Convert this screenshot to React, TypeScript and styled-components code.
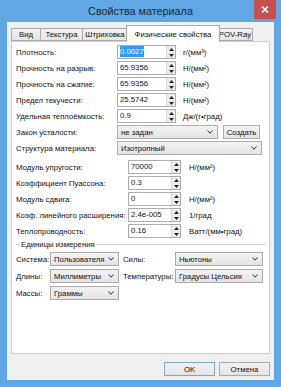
import styled, { createGlobalStyle } from 'styled-components';

const GlobalStyle = createGlobalStyle`
  html, body {
    margin: 0;
    padding: 0;
  }
  body {
    width: 281px;
    height: 387px;
    overflow: hidden;
    font-family: "Liberation Sans", Arial, sans-serif;
    color: #111;
  }
`;

const FS = '7.75px';

const upperRows = [
  { label: 'Плотность:', value: '0.0027', unit: 'г/(мм³)', selected: true },
  { label: 'Прочность на разрыв:', value: '65.9356', unit: 'Н/(мм²)' },
  { label: 'Прочность на сжатие:', value: '65.9356', unit: 'Н/(мм²)' },
  { label: 'Предел текучести:', value: '25.5742', unit: 'Н/(мм²)' },
  { label: 'Удельная теплоёмкость:', value: '0.9', unit: 'Дж/(г•град)' },
];

const lowerRows = [
  { label: 'Модуль упругости:', value: '70000', unit: 'Н/(мм²)' },
  { label: 'Коэффициент Пуассона:', value: '0.3', unit: '' },
  { label: 'Модуль сдвига:', value: '0', unit: 'Н/(мм²)' },
  { label: 'Коэф. линейного расширения:', value: '2.4e-005', unit: '1/град' },
  { label: 'Теплопроводность:', value: '0.16', unit: 'Ватт/(мм•град)' },
];

const tabs = [
  { name: 'Вид', w: 30 },
  { name: 'Текстура', w: 43 },
  { name: 'Штриховка', w: 46 },
  { name: 'Физические свойства', w: 91, active: true },
  { name: 'POV-Ray', w: 36 },
];

const Chevron = () => (
  <svg width='6' height='4' viewBox='0 0 6 4'>
    <polyline points='0.5,0.5 3,3.2 5.5,0.5' fill='none' stroke='#333' strokeWidth='1' />
  </svg>
);

const Spinner = () => (
  <SpinBox>
    <SpinHalf>
      <svg width='5' height='3' viewBox='0 0 5 3'>
        <polygon points='0,3 2.5,0 5,3' fill='#222' />
      </svg>
    </SpinHalf>
    <SpinHalf>
      <svg width='5' height='3' viewBox='0 0 5 3'>
        <polygon points='0,0 2.5,3 5,0' fill='#222' />
      </svg>
    </SpinHalf>
  </SpinBox>
);

const App = () => {
  return (
    <>
      <GlobalStyle />
      <Window>
        <TitleBar>
          <span />
          <Title>Свойства материала</Title>
          <CloseButton>
            <svg width='8' height='7' viewBox='0 0 8 7'>
              <path d='M1 0.5 L7 6.5 M7 0.5 L1 6.5' stroke='#fff' strokeWidth='1.6' />
            </svg>
          </CloseButton>
        </TitleBar>

        <Client>
          <TabStrip>
            {tabs.map((t) => (
              <Tab key={t.name} $w={t.w} $active={t.active}>
                {t.name}
              </Tab>
            ))}
          </TabStrip>

          <Panel>
            {upperRows.map((r, i) => (
              <Row key={r.label} $mt={i === 0 ? 0 : 2}>
                <Label $w={101}>{r.label}</Label>
                <NumField $w={59}>
                  <NumValue>
                    {r.selected ? <Selection>{r.value}</Selection> : r.value}
                  </NumValue>
                  <Spinner />
                </NumField>
                <Unit $ml={7}>{r.unit}</Unit>
              </Row>
            ))}

            <Row $mt={2}>
              <Label $w={101}>Закон усталости:</Label>
              <Select $w={101}>
                не задан
                <Chevron />
              </Select>
              <Button $w={37} $ml={5}>Создать</Button>
            </Row>

            <Row $mt={2}>
              <Label $w={101}>Структура материала:</Label>
              <Select $w={145}>
                Изотропный
                <Chevron />
              </Select>
            </Row>

            {lowerRows.map((r, i) => (
              <Row key={r.label} $mt={i === 0 ? 5 : 2}>
                <Label $w={112}>{r.label}</Label>
                <NumField $w={53}>
                  <NumValue>{r.value}</NumValue>
                  <Spinner />
                </NumField>
                <Unit $ml={8}>{r.unit}</Unit>
              </Row>
            ))}

            <GroupHeader>
              <GroupLine $w={4} />
              <GroupTitle>Единицы измерения</GroupTitle>
              <GroupLine />
            </GroupHeader>

            <Row $mt={2}>
              <Label $w={34}>Система:</Label>
              <Select $w={69}>
                Пользователя
                <Chevron />
              </Select>
              <Label $w={52} $ml={4}>Силы:</Label>
              <Select $w={88}>
                Ньютоны
                <Chevron />
              </Select>
            </Row>

            <Row $mt={3}>
              <Label $w={34}>Длины:</Label>
              <Select $w={69}>
                Миллиметры
                <Chevron />
              </Select>
              <Label $w={52} $ml={4}>Температуры:</Label>
              <Select $w={88}>
                Градусы Цельсия
                <Chevron />
              </Select>
            </Row>

            <Row $mt={3}>
              <Label $w={34}>Массы:</Label>
              <Select $w={69}>
                Граммы
                <Chevron />
              </Select>
            </Row>
          </Panel>

          <ButtonBar>
            <Button $w={51} $default>OK</Button>
            <Button $w={51}>Отмена</Button>
          </ButtonBar>
        </Client>
      </Window>
    </>
  );
};

const Window = styled.div`
  width: 281px;
  height: 387px;
  box-sizing: border-box;
  background: #60a7e3;
  display: flex;
  flex-direction: column;
`;

const TitleBar = styled.div`
  height: 22px;
  flex: none;
  display: grid;
  grid-template-columns: 1fr auto 1fr;
`;

const Title = styled.div`
  font-size: 10.8px;
  line-height: 22px;
  color: #1d2b39;
  white-space: nowrap;
`;

const CloseButton = styled.div`
  justify-self: end;
  width: 22px;
  height: 19px;
  margin-right: 5px;
  background: #c84f4b;
  display: flex;
  align-items: center;
  justify-content: center;
`;

const Client = styled.div`
  flex: 1;
  margin: 0 7px 7px;
  background: #f0f0f0;
  display: flex;
  flex-direction: column;
  padding: 3px 4px 4px 4px;
`;

const TabStrip = styled.div`
  height: 16px;
  flex: none;
  display: flex;
  align-items: flex-end;
`;

const Tab = styled.div<{ $w: number; $active?: boolean }>`
  box-sizing: border-box;
  width: ${(p) => (p.$active ? p.$w + 3 : p.$w)}px;
  height: ${(p) => (p.$active ? 17 : 13)}px;
  margin: ${(p) => (p.$active ? '0 -2px -1px -2px' : '0 0 0 -1px')};
  border: 1px solid #acacac;
  border-bottom: ${(p) => (p.$active ? 'none' : '1px solid #acacac')};
  background: ${(p) => (p.$active ? '#fff' : 'linear-gradient(#f3f3f3, #e6e6e6)')};
  position: relative;
  z-index: ${(p) => (p.$active ? 2 : 1)};
  display: flex;
  align-items: center;
  justify-content: center;
  font-size: ${FS};
  white-space: nowrap;

  &:first-child {
    margin-left: 0;
  }
`;

const Panel = styled.div`
  height: 313px;
  flex: none;
  box-sizing: border-box;
  border: 1px solid #cfcfcf;
  background: #fff;
  padding: 3px 3px 0 4px;
  display: flex;
  flex-direction: column;
`;

const Row = styled.div<{ $mt: number }>`
  display: flex;
  align-items: center;
  height: 14px;
  flex: none;
  margin-top: ${(p) => p.$mt}px;
`;

const Label = styled.span<{ $w: number; $ml?: number }>`
  width: ${(p) => p.$w}px;
  margin-left: ${(p) => p.$ml ?? 0}px;
  flex: none;
  font-size: ${FS};
  white-space: nowrap;
`;

const NumField = styled.div<{ $w: number }>`
  width: ${(p) => p.$w}px;
  height: 14px;
  box-sizing: border-box;
  border: 1px solid #abadb3;
  background: #fff;
  display: flex;
  flex: none;
`;

const NumValue = styled.div`
  flex: 1;
  padding-left: 2px;
  font-size: ${FS};
  line-height: 12px;
  white-space: nowrap;
  overflow: hidden;
`;

const Selection = styled.span`
  background: #3399ff;
  color: #fff;
  padding: 1px 0;
`;

const SpinBox = styled.div`
  width: 8px;
  margin: 0 0 0 1px;
  display: flex;
  flex-direction: column;
  background: #ececec;
  border-left: 1px solid #dadada;
`;

const SpinHalf = styled.div`
  flex: 1;
  display: flex;
  align-items: center;
  justify-content: center;
`;

const Unit = styled.span<{ $ml: number }>`
  margin-left: ${(p) => p.$ml}px;
  font-size: ${FS};
  white-space: nowrap;
`;

const Select = styled.div<{ $w: number }>`
  width: ${(p) => p.$w}px;
  height: 14px;
  box-sizing: border-box;
  flex: none;
  border: 1px solid #acacac;
  background: linear-gradient(#f3f3f3, #e4e4e4);
  display: flex;
  align-items: center;
  padding: 0 4px 0 3px;
  font-size: ${FS};
  white-space: nowrap;

  svg {
    margin-left: auto;
    flex: none;
  }
`;

const Button = styled.div<{ $w: number; $ml?: number; $default?: boolean }>`
  width: ${(p) => p.$w}px;
  height: 14px;
  margin-left: ${(p) => p.$ml ?? 0}px;
  box-sizing: border-box;
  flex: none;
  border: 1px solid ${(p) => (p.$default ? '#7aa9d6' : '#acacac')};
  background: linear-gradient(#f2f2f2, #e3e3e3);
  display: flex;
  align-items: center;
  justify-content: center;
  font-size: ${FS};
  white-space: nowrap;
`;

const GroupHeader = styled.div`
  height: 11px;
  margin-top: 1px;
  flex: none;
  display: flex;
  align-items: center;
  gap: 1px;
`;

const GroupLine = styled.div<{ $w?: number }>`
  height: 0;
  border-top: 1px solid #d5d5d5;
  ${(p) => (p.$w ? `width: ${p.$w}px; flex: none;` : 'flex: 1;')}
`;

const GroupTitle = styled.span`
  font-size: ${FS};
  white-space: nowrap;
`;

const ButtonBar = styled.div`
  display: flex;
  justify-content: flex-end;
  gap: 4px;
  margin-top: 8px;
`;

export default App;
